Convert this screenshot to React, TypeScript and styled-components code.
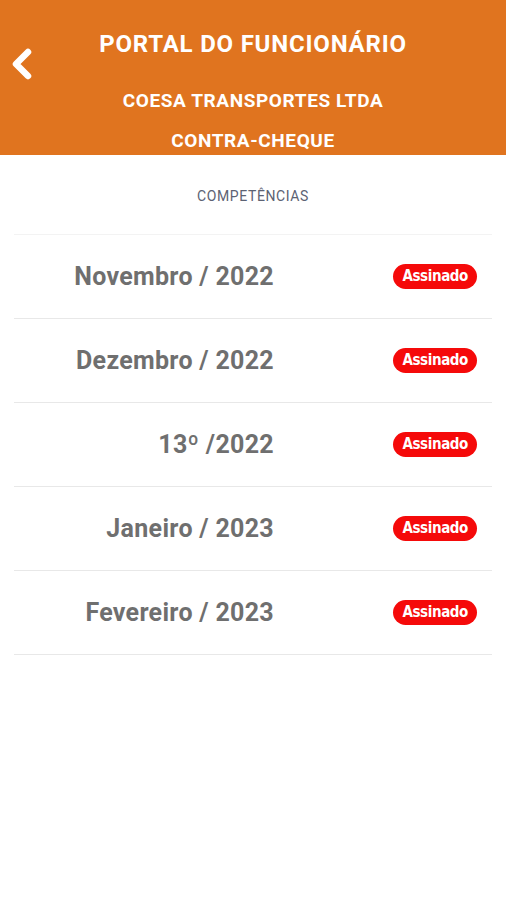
import styled, { createGlobalStyle } from "styled-components";

const GlobalStyle = createGlobalStyle`
  body {
    margin: 0;
    background: #ffffff;
    font-family: Roboto, "Noto Sans", sans-serif;
  }
`;

const competencias = [
  "Novembro / 2022",
  "Dezembro / 2022",
  "13º /2022",
  "Janeiro / 2023",
  "Fevereiro / 2023",
];

const BackIcon = () => (
  <svg width="26" height="32" viewBox="0 0 26 32" fill="none">
    <path
      d="M19 4 L7 16 L19 28"
      stroke="#ffffff"
      strokeWidth="6.5"
      strokeLinecap="round"
      strokeLinejoin="round"
    />
  </svg>
);

export default function App() {
  return (
    <Page>
      <GlobalStyle />
      <Header>
        <BackButton aria-label="Voltar">
          <BackIcon />
        </BackButton>
        <Title>PORTAL DO FUNCIONÁRIO</Title>
        <Subtitle>COESA TRANSPORTES LTDA</Subtitle>
        <Subtitle>CONTRA-CHEQUE</Subtitle>
      </Header>
      <SectionLabel>COMPETÊNCIAS</SectionLabel>
      <List>
        {competencias.map((label) => (
          <Row key={label}>
            <Period>{label}</Period>
            <StatusCell>
              <Badge>Assinado</Badge>
            </StatusCell>
          </Row>
        ))}
      </List>
    </Page>
  );
}

const Page = styled.div`
  width: 506px;
  min-height: 900px;
  background: #ffffff;
`;

const Header = styled.header`
  position: relative;
  background: #e0741f;
  height: 155px;
  box-sizing: border-box;
  padding-top: 29px;
  display: flex;
  flex-direction: column;
  align-items: center;
  color: #ffffff;
`;

const BackButton = styled.button`
  position: absolute;
  left: 9px;
  top: 48px;
  background: none;
  border: 0;
  padding: 0;
  display: flex;
`;

const Title = styled.h1`
  margin: 0 0 32px;
  font-size: 24px;
  line-height: 30px;
  font-weight: 700;
  letter-spacing: 0.8px;
`;

const Subtitle = styled.div`
  font-size: 19px;
  line-height: 20px;
  font-weight: 700;
  letter-spacing: 0.6px;
  margin-bottom: 20px;
`;

const SectionLabel = styled.div`
  text-align: center;
  color: #5c6273;
  font-size: 14px;
  letter-spacing: 0.6px;
  padding: 33px 0 30px;
  line-height: 16px;
`;

const List = styled.div`
  margin: 0 14px;
  border-top: 1px solid #f3f3f3;
`;

const Row = styled.div`
  height: 83px;
  display: flex;
  align-items: center;
  border-bottom: 1px solid #e8e8e8;
`;

const Period = styled.div`
  width: 260px;
  text-align: right;
  font-size: 25px;
  font-weight: 700;
  letter-spacing: 0.3px;
  color: #6f6f6f;
`;

const StatusCell = styled.div`
  flex: 1;
  display: flex;
  justify-content: flex-end;
  padding-right: 15px;
`;

const Badge = styled.span`
  background: #f50a0a;
  color: #ffffff;
  border-radius: 13px;
  padding: 3px 9px 3px;
  font-family: "DejaVu Sans Condensed", "Liberation Sans Narrow", Roboto, sans-serif;
  font-size: 15px;
  font-weight: 700;
  line-height: 19px;
  letter-spacing: -0.4px;
`;
